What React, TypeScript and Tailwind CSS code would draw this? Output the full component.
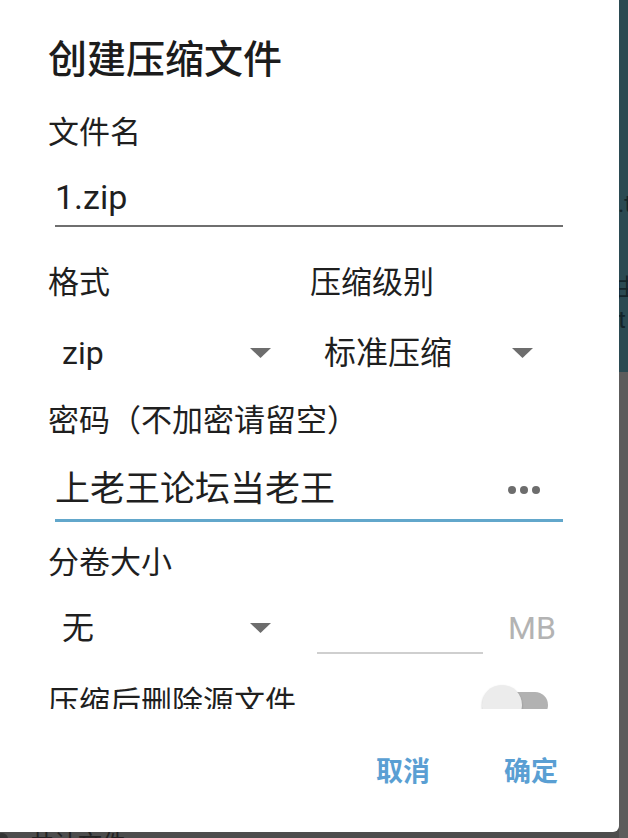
import React from 'react';

const font = "font-['Roboto','Noto_Sans_CJK_SC',sans-serif]";

function Arrow() {
  return (
    <svg width="21" height="10" viewBox="0 0 21 10" className="shrink-0">
      <polygon points="0,0 21,0 10.5,10" fill="#6d6d6d" />
    </svg>
  );
}

function Spinner({ value }: { value: string }) {
  return (
    <div className="flex items-center justify-between pl-[14px] pr-[39px] h-[40px]">
      <span className="text-[32px] leading-[40px] text-[#1f1f1f]">{value}</span>
      <Arrow />
    </div>
  );
}

export default function App() {
  return (
    <div className={`w-[628px] h-[838px] overflow-hidden flex ${font}`}>
      {/* dialog column */}
      <div className="w-[619px] shrink-0 flex flex-col bg-[#4d4d4d]">
        <div className="h-[832px] shrink-0 bg-white rounded-br-[6px] flex flex-col">
          <div className="pt-[40px] pl-[48px]">
            <h1 className="h-[40px] text-[39px] leading-[40px] font-medium text-[#1c1c1c]">创建压缩文件</h1>
          </div>

          {/* scrolling body */}
          <div className="h-[629px] overflow-hidden pl-[48px] pr-[47px]">
            <div className="mt-[33px] h-[40px] text-[31px] leading-[40px] text-[#1f1f1f]">文件名</div>
            <div className="mt-[24px] ml-[7px] mr-[9px] pb-[8px] border-b-2 border-[#6f6f6f]">
              <div className="text-[34px] leading-[40px] text-[#1f1f1f]">1.zip</div>
            </div>

            <div className="mt-[36px] grid grid-cols-2">
              <div className="h-[40px] text-[31px] leading-[40px] text-[#1f1f1f]">格式</div>
              <div className="h-[40px] text-[31px] leading-[40px] text-[#1f1f1f]">压缩级别</div>
            </div>
            <div className="mt-[30px] grid grid-cols-2">
              <Spinner value="zip" />
              <Spinner value="标准压缩" />
            </div>

            <div className="mt-[28px] h-[40px] text-[31px] leading-[40px] text-[#1f1f1f]">密码（不加密请留空）</div>
            <div className="mt-[29px] ml-[7px] mr-[9px] pb-[9px] border-b-[3px] border-[#62a7cb] flex items-center justify-between">
              <div className="text-[35px] leading-[40px] text-[#1f1f1f]">上老王论坛当老王</div>
              <div className="flex gap-[4px] mr-[23px]">
                <span className="w-[8px] h-[8px] rounded-full bg-[#6d6d6d]" />
                <span className="w-[8px] h-[8px] rounded-full bg-[#6d6d6d]" />
                <span className="w-[8px] h-[8px] rounded-full bg-[#6d6d6d]" />
              </div>
            </div>

            <div className="mt-[21px] h-[40px] text-[31px] leading-[40px] text-[#1f1f1f]">分卷大小</div>
            <div className="mt-[25px] grid grid-cols-2">
              <Spinner value="无" />
              <div className="flex items-start">
                <div className="ml-[7px] w-[166px] h-[46px] border-b-2 border-[#cfcfcf]" />
                <span className="ml-[25px] text-[32px] leading-[40px] text-[#b3b3b3]">MB</span>
              </div>
            </div>

            <div className="mt-[29px] h-[40px] flex items-center justify-between">
              <span className="text-[31px] leading-[40px] text-[#1f1f1f]">压缩后删除源文件</span>
              <div className="relative w-[66px] h-[40px] mr-[24px] mt-[4px]">
                <div className="absolute left-[6px] right-0 top-[7px] h-[26px] rounded-full bg-[#b2b2b2]" />
                <div className="absolute left-0 top-0 w-[40px] h-[40px] rounded-full bg-[#ececec] shadow-[0_1px_2px_rgba(0,0,0,0.25)]" />
              </div>
            </div>
          </div>

          {/* buttons */}
          <div className="mt-[43px] flex justify-end gap-[74px] pr-[61px]">
            <button className="text-[27px] leading-[40px] font-bold text-[#5a9fd3]">取消</button>
            <button className="text-[27px] leading-[40px] font-bold text-[#5a9fd3]">确定</button>
          </div>
        </div>
        <div className="flex-1 flex items-start overflow-hidden">
          <div className="w-[12px] h-[12px] rounded-full bg-[#333333] -ml-[4px] mt-[1px]" />
          <span className="ml-[22px] text-[24px] leading-[24px] text-[#222222]">共计文件</span>
        </div>
      </div>

      {/* background behind dialog */}
      <div className="flex-1 min-w-0 flex flex-col">
        <div className="h-[372px] bg-[#2b4a52] overflow-hidden flex flex-col text-[#14252a] text-[24px] whitespace-nowrap">
          <span className="mt-[190px] leading-[28px] -ml-[1px]">.txt</span>
          <span className="mt-[56px] leading-[28px] -ml-[4px]">由</span>
          <span className="mt-[4px] leading-[28px] -ml-[1px]">t</span>
        </div>
        <div className="flex-1 bg-[#5c5c5c]" />
      </div>
    </div>
  );
}
